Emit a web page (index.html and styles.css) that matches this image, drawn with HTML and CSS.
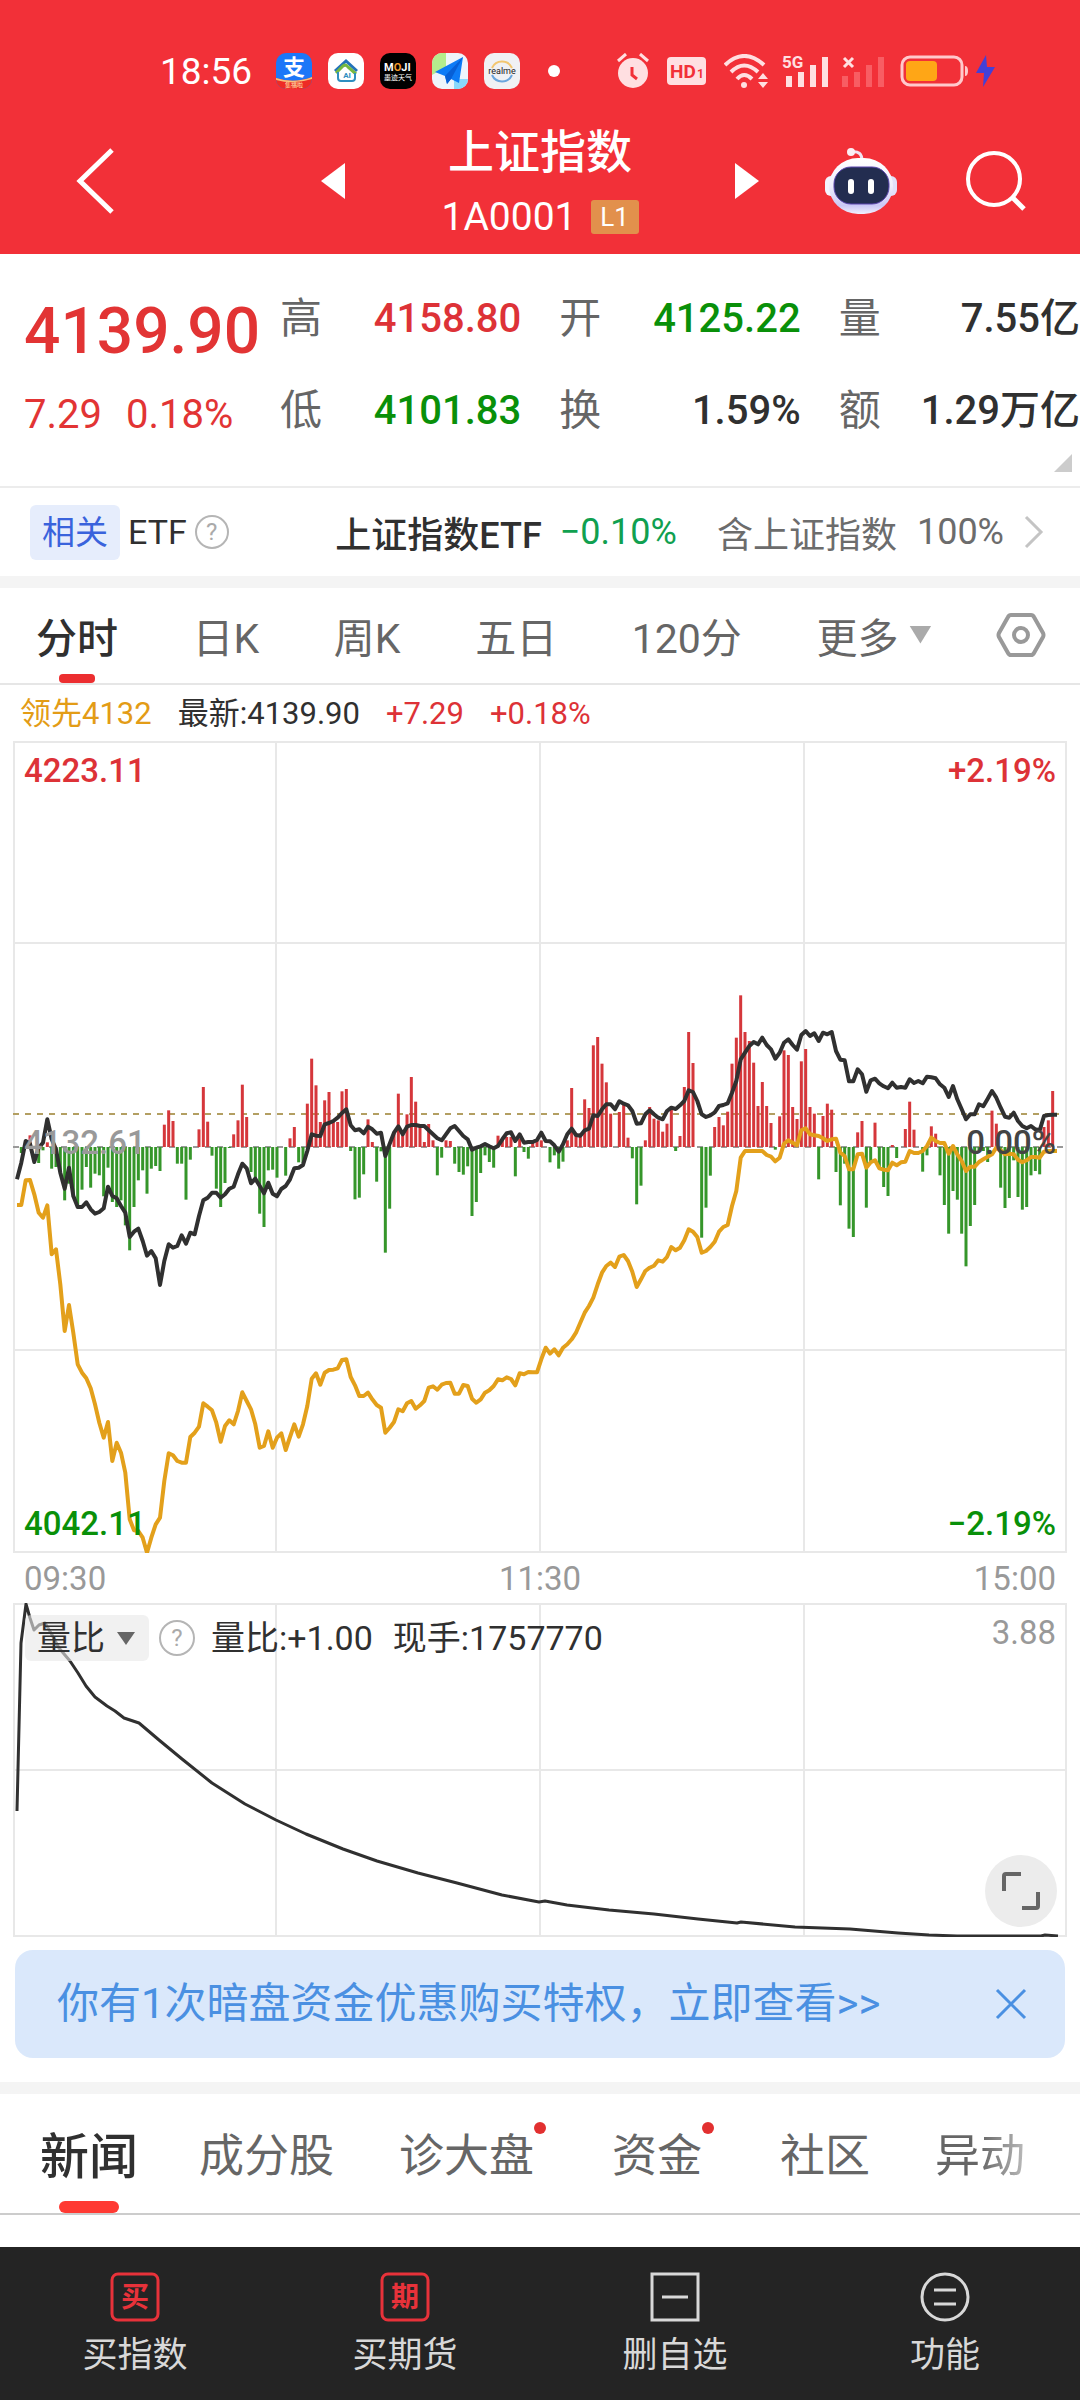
FILE: index.html
```html
<!DOCTYPE html>
<html lang="zh-CN">

<head>
  <meta charset="UTF-8">
  <meta name="viewport" content="width=device-width, initial-scale=1.0">
  <title>上证指数</title>
  <link rel="stylesheet" href="styles.css">
</head>

<body>
  <header class="top">
    <div class="status">
      <span class="time">18:56</span>
      <div class="apps">
        <svg class="app" viewBox="0 0 36 36">
          <defs><clipPath id="appClip"><rect width="36" height="36" rx="10" /></clipPath></defs>
          <g clip-path="url(#appClip)">
            <rect width="36" height="36" fill="#1c77f8" />
            <path d="M0 25 Q18 31 36 24 V36 H0Z" fill="#ee2b25" />
            <path d="M0 25 Q18 31 36 24 V26 Q18 32 0 27Z" fill="#f8c07c" />
            <text x="18" y="22" font-size="22" font-weight="700" fill="#fff" text-anchor="middle">支</text>
            <text x="18" y="34" font-size="6" fill="#ffe6b0" text-anchor="middle">集福啦</text>
          </g>
        </svg>
        <svg class="app" viewBox="0 0 36 36">
          <rect width="36" height="36" rx="10" fill="#fff" />
          <path d="M7 18 L18 8 L29 18" fill="none" stroke="#2273b9" stroke-width="3" />
          <path d="M8 20 L15 13 Q18 11 20 14 L28 21" fill="none" stroke="#75b842" stroke-width="3" />
          <path d="M10 19 V25 Q10 28 13 28 H24 Q27 28 27 25 V20" fill="none" stroke="#2e8ec0" stroke-width="2" />
          <text x="19" y="25" font-size="8" font-weight="700" fill="#2e8ec0" text-anchor="middle">AI</text>
        </svg>
        <svg class="app" viewBox="0 0 36 36">
          <rect width="36" height="36" rx="10" fill="#000" />
          <text x="4" y="18" font-size="11" font-weight="700" fill="#fff">M<tspan fill="#f39a2a">O</tspan>JI</text>
          <text x="18" y="27" font-size="7" fill="#fff" text-anchor="middle">墨迹天气</text>
        </svg>
        <svg class="app" viewBox="0 0 36 36">
          <g clip-path="url(#appClip)">
            <rect width="36" height="36" fill="#eef4fb" />
            <path d="M0 0 H14 V14 L0 22Z" fill="#b5ec8d" />
            <path d="M22 26 H36 V36 H22Z" fill="#8ad8fb" />
            <path d="M3 19 L31 4 L27 30 L19 26 L15 31 L13 23Z" fill="#0d7bf6" />
            <path d="M31 4 L13 23 L15 31 L19 26Z" fill="#075fd6" />
          </g>
        </svg>
        <svg class="app" viewBox="0 0 36 36">
          <rect width="36" height="36" rx="10" fill="#f0f1f4" />
          <path d="M8 15 A11 11 0 0 1 28 15" fill="none" stroke="#f3c66f" stroke-width="2" />
          <path d="M8 22 A11 11 0 0 0 28 22" fill="none" stroke="#6aa5dd" stroke-width="2" />
          <text x="18" y="21" font-size="9" fill="#222" text-anchor="middle">realme</text>
        </svg>
      </div>
      <i class="more-dot"></i>
      <div class="signals">
        <svg class="wide" width="32" height="36" viewBox="0 0 32 36">
          <circle cx="16" cy="20" r="15" fill="#ffdfe1" />
          <path d="M1 8 L9 1 M23 1 L31 8" stroke="#ffdfe1" stroke-width="3" />
          <path d="M15 14 V22 L20 26" fill="none" stroke="#f23038" stroke-width="3" />
        </svg>
        <svg class="wide" width="39" height="28" viewBox="0 0 39 28">
          <rect width="39" height="28" rx="4" fill="#ffdfe1" />
          <text x="3" y="21" font-size="19" font-weight="700" fill="#f23038">HD</text>
          <text x="30" y="21" font-size="12" font-weight="700" fill="#f23038">1</text>
        </svg>
        <svg width="44" height="34" viewBox="0 0 44 34">
          <g fill="none" stroke="#ffdfe1" stroke-width="4">
            <path d="M1 11 Q20 -7 40 11" />
            <path d="M7 18 Q20 5 34 18" />
            <path d="M13 25 Q20 17 28 25" />
          </g>
          <circle cx="20" cy="31" r="3" fill="#ffdfe1" />
          <path d="M34 25 L39 19 L44 25Z M34 28 H44 L39 34Z" fill="#ffdfe1" />
        </svg>
        <svg width="46" height="42" viewBox="0 -4 46 42">
          <text x="0" y="14" font-size="17" font-weight="700" fill="#ffdfe1">5G</text>
          <path d="M4 22 h6 v11 h-6z M16 18 h6 v15 h-6z M28 11 h6 v22 h-6z M40 3 h6 v30 h-6z" fill="#ffdfe1" />
        </svg>
        <svg width="44" height="34" viewBox="0 0 44 34">
          <path d="M2 4 L11 13 M11 4 L2 13" stroke="#ffdfe1" stroke-width="3" />
          <path d="M0 22 h6 v11 h-6z M12 18 h6 v15 h-6z M24 11 h6 v22 h-6z M36 3 h6 v30 h-6z" fill="#f85d63" />
        </svg>
        <svg width="96" height="32" viewBox="0 0 96 32">
          <rect x="2" y="2" width="60" height="28" rx="8" fill="none" stroke="#ffc9cc" stroke-width="3" />
          <rect x="6" y="6" width="31" height="20" rx="4" fill="#ffa616" />
          <path d="M65 11 q3 0 3 5 t-3 5z" fill="#ffc9cc" />
          <path d="M86 0 L76 18 H84 L83 32 L95 12 H87Z" fill="#4340d8" />
        </svg>
      </div>
    </div>
    <div class="nav">
      <button type="button" class="back" aria-label="返回">
        <svg width="38" height="66" viewBox="0 0 38 66"><path d="M36 2 L4 33 L36 64" fill="none" stroke="#fff" stroke-width="5" /></svg>
      </button>
      <button type="button" class="prev" aria-label="上一个">
        <svg width="24" height="36" viewBox="0 0 24 36"><path d="M24 0 V36 L0 18Z" fill="#fff" /></svg>
      </button>
      <div class="name">
        <h1>上证指数</h1>
        <p>1A0001<span class="level">L1</span></p>
      </div>
      <button type="button" class="next" aria-label="下一个">
        <svg width="24" height="36" viewBox="0 0 24 36"><path d="M0 0 V36 L24 18Z" fill="#fff" /></svg>
      </button>
      <button type="button" class="robot" aria-label="智能助手">
        <svg width="72" height="68" viewBox="0 0 72 68">
          <defs>
            <linearGradient id="shell" x1="0" y1="0" x2="0" y2="1">
              <stop offset="0" stop-color="#fff" />
              <stop offset="0.5" stop-color="#f0eefc" />
              <stop offset="0.85" stop-color="#cbc8f5" />
              <stop offset="1" stop-color="#f1f0fd" />
            </linearGradient>
          </defs>
          <path d="M26 5 Q37 3 37 14" fill="none" stroke="#f0e4f2" stroke-width="3" />
          <circle cx="26" cy="5" r="4" fill="#fbeef4" />
          <rect x="0" y="29" width="12" height="20" rx="6" fill="#f4f3fd" />
          <rect x="60" y="29" width="12" height="20" rx="6" fill="#e2e0fa" />
          <rect x="4" y="11" width="64" height="56" rx="29" fill="url(#shell)" />
          <rect x="9" y="20" width="55" height="37" rx="17" fill="#232d50" stroke="#5a45ae" stroke-width="1" />
          <rect x="23" y="32" width="6" height="15" rx="3" fill="#fff" />
          <rect x="43" y="32" width="6" height="15" rx="3" fill="#fff" />
        </svg>
      </button>
      <button type="button" class="search" aria-label="搜索">
        <svg width="60" height="60" viewBox="0 0 60 60">
          <circle cx="28" cy="28" r="26" fill="none" stroke="#fff" stroke-width="4" />
          <path d="M47 47 L58 58" stroke="#fff" stroke-width="5" />
        </svg>
      </button>
    </div>
  </header>

  <main>
    <section class="quote">
      <div class="price">
        <strong>4139.90</strong>
        <p><span>7.29</span><span>0.18%</span></p>
      </div>
      <dl class="figures">
        <div><dt>高</dt><dd class="up">4158.80</dd></div>
        <div><dt>开</dt><dd class="down">4125.22</dd></div>
        <div><dt>量</dt><dd>7.55亿</dd></div>
        <div><dt>低</dt><dd class="down">4101.83</dd></div>
        <div><dt>换</dt><dd>1.59%</dd></div>
        <div><dt>额</dt><dd>1.29万亿</dd></div>
      </dl>
      <i class="corner"></i>
    </section>

    <a class="etf" href="#etf">
      <span class="tag">相关</span>
      <span class="etf-label">ETF</span>
      <span class="help">?</span>
      <span class="etf-name">上证指数ETF</span>
      <span class="etf-change">−0.10%</span>
      <span class="etf-part">含上证指数</span>
      <span class="etf-rate">100%</span>
      <svg width="20" height="34" viewBox="0 0 20 34"><path d="M2 2 L17 17 L2 32" fill="none" stroke="#c4c4c4" stroke-width="3" /></svg>
    </a>

    <nav class="periods">
      <button type="button" class="active">分时</button>
      <button type="button">日K</button>
      <button type="button">周K</button>
      <button type="button">五日</button>
      <button type="button">120分</button>
      <button type="button" class="more">更多<i class="arrow"></i></button>
      <button type="button" aria-label="设置">
        <svg width="50" height="46" viewBox="0 0 50 46">
          <path d="M15 3 H35 Q37 3 38 5 L47 21 Q48 23 47 25 L38 41 Q37 43 35 43 H15 Q13 43 12 41 L3 25 Q2 23 3 21 L12 5 Q13 3 15 3Z" fill="none" stroke="#999" stroke-width="4" />
          <circle cx="25" cy="23" r="7" fill="none" stroke="#999" stroke-width="4" />
        </svg>
      </button>
    </nav>

    <p class="legend">
      <span class="lead">领先4132</span>
      <span>最新:4139.90</span>
      <span class="up">+7.29</span>
      <span class="up">+0.18%</span>
    </p>

    <div class="chart">
      <svg class="minute" viewBox="0 0 1054 812">
        <path class="grid" d="M1 1 H1053 V811 H1 Z M263 0 V812 M527 0 V812 M791 0 V812 M0 202 H1054 M0 609 H1054" />
        <path class="dash zero" d="M0 406 H1054" />
        <path class="dash now" d="M0 373 H1046" />
        <g class="bars"></g>
        <polyline class="line average" />
        <polyline class="line latest" />
      </svg>
      <span class="label high up">4223.11</span>
      <span class="label high right up">+2.19%</span>
      <span class="label middle">4132.61</span>
      <span class="label middle right">0.00%</span>
      <span class="label low down">4042.11</span>
      <span class="label low right down">−2.19%</span>
    </div>
    <div class="times"><span>09:30</span><span>11:30</span><span>15:00</span></div>

    <div class="chart">
      <svg class="ratio" viewBox="0 0 1054 334">
        <path class="grid" d="M1 1 H1053 V333 H1 Z M263 0 V334 M527 0 V334 M791 0 V334 M0 167 H1054" />
        <polyline class="line volume" points="4,208 8,40 13,1 17,15 21,27 26,22 32,20 38,30 46,45 57,58 65,70 73,83 82,94 94,103 102,108 111,115 126,120 146,137 169,156 199,180 232,201 263,217 293,231 330,246 364,258 405,270 444,280 489,292 526,299 532,298 554,302 596,307 641,311 685,316 724,320 728,319 782,324 837,326 885,330 916,332 944,333 1028,333 1032,332 1045,333" />
      </svg>
      <div class="tools">
        <label class="picker">
          <select aria-label="指标">
            <option>量比</option>
            <option>成交量</option>
          </select>
          <i class="arrow"></i>
        </label>
        <span class="help">?</span>
        <span>量比:+1.00</span>
        <span>现手:1757770</span>
        <span class="max">3.88</span>
      </div>
      <button type="button" class="expand" aria-label="放大">
        <svg width="38" height="38" viewBox="0 0 38 38"><path d="M2 19 V4 Q2 2 4 2 H19 M36 20 V34 Q36 36 34 36 H20" fill="none" stroke="#666" stroke-width="4" /></svg>
      </button>
    </div>

    <div class="notice">
      <a href="#offer">你有1次暗盘资金优惠购买特权，立即查看&gt;&gt;</a>
      <button type="button" aria-label="关闭">
        <svg width="32" height="32" viewBox="0 0 32 32"><path d="M2 2 L30 30 M30 2 L2 30" stroke="#4a90e2" stroke-width="3" /></svg>
      </button>
    </div>

    <nav class="sections">
      <button type="button" class="active">新闻</button>
      <button type="button">成分股</button>
      <button type="button" class="new">诊大盘</button>
      <button type="button" class="new">资金</button>
      <button type="button">社区</button>
      <button type="button" class="fade">异动</button>
    </nav>
  </main>

  <footer class="actions">
    <button type="button">
      <svg class="red" viewBox="0 0 50 50"><rect x="2" y="2" width="46" height="46" rx="6" /><text x="25" y="35" text-anchor="middle">买</text></svg>
      买指数
    </button>
    <button type="button">
      <svg class="red" viewBox="0 0 50 50"><rect x="2" y="2" width="46" height="46" rx="6" /><text x="25" y="35" text-anchor="middle">期</text></svg>
      买期货
    </button>
    <button type="button">
      <svg viewBox="0 0 50 50"><rect x="2" y="2" width="46" height="46" /><path d="M12 25 H38" /></svg>
      删自选
    </button>
    <button type="button">
      <svg viewBox="0 0 50 50"><circle cx="25" cy="25" r="23" /><path d="M14 18 H36 M14 32 H36" /></svg>
      功能
    </button>
  </footer>

  <script>
    // 每分钟一个点，共241个
    const step = 1040 / 240
    const left = 4
    const zeroY = 406

    // 红绿柱，正数向上
    const bars = [
      0, -18, 20, 35, 0, -48, -10, 14, -65, -60, -75, -160, -110, -150, -175, -128, -60, -122, -80, -85,
      -148, -62, -165, -180, -160, -235, -310, -180, -100, -70, -140, -65, -57, -72, 67, 110, 78, -50, -50, -158,
      -38, 0, 53, 180, 76, -26, -125, -180, -108, -3, 38, 80, 187, 90, -75, -95, -200, -240, -70, -68,
      -92, 0, -86, 26, 60, -46, -48, 130, 265, 185, 75, 140, 165, 75, 75, 167, 174, -12, -157, -152,
      -82, 83, 15, -104, -13, -317, -185, 45, 160, 45, 98, 210, 136, 60, 15, 69, 20, -85, -32, 20,
      18, -50, -75, -83, -58, -207, -165, -78, -25, -45, -62, 34, 24, 30, 30, -88, 25, -15, -35, 15,
      18, 20, 0, -46, -25, -65, -44, 20, 177, 40, 40, 143, 117, 305, 330, 250, 194, 100, 0, 105,
      130, 28, -34, -172, -116, 20, 120, 85, 80, 46, 70, 115, -12, 33, 180, 345, 252, 0, -272, -182,
      -86, 60, 90, 65, 106, 250, 328, 455, 345, 318, 253, 123, 195, 123, 72, -8, 92, 290, 276, 120,
      84, 257, 294, 120, 100, -97, 93, 130, 112, -75, -175, -50, -245, -270, 44, 78, -182, -45, 73, -60,
      -120, -147, 6, -33, 0, 54, 136, 52, 0, -74, -25, 62, 40, -85, -174, -260, -132, -158, -260, -358,
      -237, -174, -10, -12, -45, 109, 70, -122, -183, -153, -40, -150, -188, -180, -85, -72, -82, 60, 80, 168, 0
    ]

    // 最新价
    const latest = [
      655, 605, 540, 548, 603, 560, 545, 475, 535, 565, 635, 683, 620, 705, 738, 738, 724, 745, 758, 753,
      742, 677, 705, 712, 735, 755, 828, 812, 803, 840, 884, 870, 892, 972, 900, 850, 860, 855, 823, 848,
      815, 820, 765, 718, 710, 695, 695, 710, 700, 683, 677, 640, 608, 622, 667, 653, 675, 697, 665, 698,
      706, 684, 675, 655, 622, 620, 612, 570, 520, 524, 525, 490, 486, 480, 470, 456, 445, 493, 508, 505,
      517, 497, 505, 518, 515, 585, 548, 515, 496, 520, 497, 492, 492, 495, 495, 508, 520, 532, 538, 520,
      502, 495, 510, 525, 535, 566, 560, 556, 549, 556, 562, 555, 535, 517, 514, 540, 520, 545, 543, 543,
      537, 515, 540, 541, 553, 572, 550, 520, 503, 522, 524, 508, 503, 463, 465, 445, 430, 430, 445, 421,
      428, 433, 450, 488, 487, 460, 448, 460, 470, 475, 450, 440, 444, 433, 420, 388, 393, 420, 460, 468,
      463, 454, 435, 432, 427, 395, 360, 295, 275, 255, 243, 250, 230, 252, 265, 293, 275, 245, 235, 252,
      266, 222, 210, 225, 217, 240, 215, 220, 213, 270, 296, 298, 361, 361, 325, 340, 392, 358, 353, 367,
      376, 382, 365, 380, 378, 380, 355, 366, 360, 367, 347, 349, 352, 370, 380, 408, 375, 415, 445, 475,
      460, 460, 430, 436, 413, 390, 410, 440, 467, 470, 455, 480, 495, 502, 495, 505, 508, 465, 462, 461, 461
    ]

    // 领先
    const average = [
      732, 732, 658, 657, 700, 755, 770, 733, 880, 865, 970, 1110, 1032, 1115, 1210, 1235, 1252, 1282, 1330, 1385,
      1430, 1383, 1500, 1445, 1475, 1535, 1675, 1708, 1710, 1730, 1775, 1730, 1690, 1670, 1560, 1477, 1483, 1500, 1505, 1505,
      1428, 1415, 1397, 1327, 1337, 1348, 1385, 1442, 1395, 1378, 1390, 1350, 1294, 1320, 1345, 1390, 1460, 1455, 1411, 1460,
      1430, 1417, 1467, 1428, 1390, 1427, 1390, 1335, 1253, 1237, 1271, 1235, 1227, 1226, 1222, 1197, 1195, 1248, 1273, 1305,
      1305, 1295, 1315, 1332, 1340, 1415, 1400, 1383, 1345, 1351, 1327, 1320, 1343, 1333, 1320, 1280, 1276, 1286, 1271, 1266,
      1265, 1298, 1298, 1272, 1275, 1313, 1325, 1315, 1295, 1288, 1275, 1255, 1258, 1249, 1254, 1273, 1237, 1240, 1233, 1234,
      1234, 1195, 1160, 1178, 1165, 1183, 1160, 1150, 1135, 1115, 1085, 1055, 1035, 1010, 970, 935, 915, 905, 918, 887,
      882, 900, 932, 978, 955, 930, 920, 914, 898, 902, 888, 858, 868, 860, 838, 805, 812, 828, 875, 870,
      858, 842, 812, 798, 792, 735, 690, 590, 570, 570, 570, 570, 570, 582, 587, 601, 590, 548, 538, 545,
      553, 508, 502, 520, 523, 525, 532, 540, 535, 533, 575, 585, 625, 625, 580, 578, 620, 604, 598, 622,
      626, 628, 605, 613, 604, 602, 570, 576, 576, 570, 555, 530, 540, 546, 546, 578, 555, 580, 600, 630,
      617, 617, 603, 595, 587, 580, 560, 568, 580, 578, 580, 596, 604, 598, 588, 588, 590, 572, 570, 570, 570
    ]

    function drawLine(selector, data) {
      const points = data.map((value, index) => {
        return (left + index * step).toFixed(1) + ',' + (220 + value / 3).toFixed(1)
      })
      document.querySelector(selector).setAttribute('points', points.join(' '))
    }

    const oBars = document.querySelector('.bars')
    bars.forEach((value, index) => {
      if (value === 0) return
      const rect = document.createElementNS('http://www.w3.org/2000/svg', 'rect')
      const height = Math.abs(value) / 3
      rect.setAttribute('x', left + index * step - 1.5)
      rect.setAttribute('y', value > 0 ? zeroY - height : zeroY)
      rect.setAttribute('width', 3)
      rect.setAttribute('height', height)
      rect.setAttribute('class', value > 0 ? 'bar-up' : 'bar-down')
      oBars.appendChild(rect)
    })
    drawLine('.average', average)
    drawLine('.latest', latest)
  </script>
</body>

</html>
```

FILE: styles.css
```css
* {
  box-sizing: border-box;
}

body {
  margin: 0;
  min-height: 100vh;
  display: flex;
  flex-direction: column;
  background-color: #fff;
  color: #303030;
  font-family: Roboto, "Noto Sans CJK SC", sans-serif;
}

h1,
p,
dl,
dd {
  margin: 0;
}

button {
  margin: 0;
  padding: 0;
  border: none;
  background: none;
  color: inherit;
  font: inherit;
  cursor: pointer;
}

a {
  color: inherit;
  text-decoration: none;
}

svg {
  display: block;
  flex-shrink: 0;
}

.up {
  color: #dd3237;
}

.down {
  color: #099009;
}

/* 顶部 */
.top {
  background-color: #f23038;
  color: #fff;
}

.status {
  height: 114px;
  padding: 28px 84px 0 160px;
  display: flex;
  align-items: center;
}

.time {
  width: 116px;
  font-size: 37px;
}

.apps {
  display: flex;
  gap: 16px;
}

.app {
  width: 36px;
  height: 36px;
}

.more-dot {
  margin-left: 28px;
  width: 12px;
  height: 12px;
  border-radius: 50%;
  background-color: #fff;
}

.signals {
  margin-left: auto;
  display: flex;
  align-items: center;
  gap: 14px;
}

.signals .wide {
  margin-right: 4px;
}

.nav {
  height: 140px;
  padding: 0 54px 6px 76px;
  display: grid;
  grid-template-columns: 245px 24px 1fr 24px 66px 72px 129px;
  align-items: center;
}

.nav .search {
  justify-self: end;
}

.nav .robot {
  grid-column: 6;
}

.name {
  text-align: center;
}

.name h1 {
  font-size: 46px;
  font-weight: 500;
  line-height: 72px;
}

.name p {
  display: flex;
  justify-content: center;
  align-items: center;
  gap: 14px;
  font-size: 39px;
  line-height: 58px;
}

.level {
  width: 48px;
  border-radius: 3px;
  background-color: #e2904c;
  font-size: 26px;
  line-height: 34px;
}

/* 行情 */
.quote {
  position: relative;
  padding: 34px 0 40px 24px;
  display: flex;
}

.price {
  width: 256px;
  flex-shrink: 0;
  color: #e23434;
}

.price strong {
  display: block;
  font-size: 64px;
  font-weight: 500;
  line-height: 88px;
}

.price p {
  margin-top: 8px;
  display: flex;
  gap: 24px;
  font-size: 40px;
  line-height: 62px;
}

.figures {
  flex: 1;
  display: grid;
  grid-template-columns: repeat(3, 1fr);
  align-content: start;
  gap: 30px 38px;
  font-size: 40px;
  line-height: 62px;
}

.figures div {
  display: flex;
  justify-content: space-between;
}

.figures dt {
  font-size: 42px;
  color: #666;
}

.figures dd {
  font-weight: 500;
  white-space: nowrap;
}

.corner {
  position: absolute;
  right: 8px;
  bottom: 14px;
  width: 18px;
  height: 18px;
  background-color: #ccc;
  clip-path: polygon(100% 0, 100% 100%, 0 100%);
}

/* 相关ETF */
.etf {
  height: 90px;
  padding: 0 36px 0 30px;
  display: flex;
  align-items: center;
  border-top: 2px solid #ececec;
  font-size: 36px;
}

.tag {
  padding: 0 12px;
  border-radius: 6px;
  background-color: #e6edfc;
  color: #3a63dc;
  font-size: 33px;
  line-height: 55px;
}

.etf-label {
  margin: 0 8px;
  font-size: 34px;
}

.help {
  width: 34px;
  height: 34px;
  border: 2px solid #b5b5b5;
  border-radius: 50%;
  color: #aaa;
  font-size: 24px;
  line-height: 30px;
  text-align: center;
}

.etf-name {
  margin-left: auto;
  font-weight: 500;
}

.etf-change {
  margin: 0 40px 0 18px;
  color: #10a050;
}

.etf-part,
.etf-rate {
  margin-right: 20px;
  color: #6c6c6c;
}

/* 周期 */
.periods {
  height: 109px;
  padding: 0 34px 0 36px;
  display: flex;
  justify-content: space-between;
  border-top: 12px solid #f4f4f4;
  border-bottom: 2px solid #e6e6e6;
  color: #666;
  font-size: 41px;
}

.periods button,
.sections button {
  position: relative;
  display: flex;
  align-items: center;
  padding-bottom: 2px;
}

.periods .more {
  margin-right: -10px;
}

.periods .active,
.sections .active {
  color: #303030;
  font-weight: 500;
}

.periods .active::after,
.sections .active::after {
  content: "";
  position: absolute;
  left: 50%;
  bottom: 0;
  width: 36px;
  height: 9px;
  border-radius: 4px;
  background-color: #ec2e30;
  transform: translateX(-50%);
}

.arrow {
  width: 22px;
  height: 18px;
  background-color: #aaa;
  clip-path: polygon(0 0, 100% 0, 50% 100%);
}

.periods .arrow {
  margin-left: 11px;
}

/* 分时图 */
.legend {
  padding: 2px 20px 0;
  display: flex;
  gap: 26px;
  font-size: 31px;
  line-height: 54px;
}

.lead {
  color: #e39c16;
}

.chart {
  position: relative;
  margin: 0 13px;
}

.chart svg {
  max-width: 100%;
}

.chart .minute,
.chart .ratio {
  width: 100%;
  height: auto;
}

.grid {
  fill: none;
  stroke: #e8e8e8;
  stroke-width: 2;
}

.dash {
  fill: none;
  stroke-width: 2;
  stroke-dasharray: 6 6;
}

.zero {
  stroke: #999;
}

.now {
  stroke: #b39f62;
}

.bar-up {
  fill: #d5373b;
}

.bar-down {
  fill: #35962a;
}

.line {
  fill: none;
  stroke: #303030;
  stroke-width: 4;
  stroke-linejoin: round;
}

.average {
  stroke: #e3a01b;
}

.volume {
  stroke-width: 3;
}

.label {
  position: absolute;
  left: 11px;
  font-size: 33px;
  font-weight: 500;
  line-height: 40px;
}

.label.right {
  left: auto;
  right: 11px;
}

.high {
  top: 10px;
}

.middle {
  top: 50%;
  transform: translateY(-24px);
  color: #999;
}

.middle.right {
  color: #444;
}

.low {
  bottom: 9px;
}

.times {
  padding: 6px 24px 4px;
  display: flex;
  justify-content: space-between;
  color: #999;
  font-size: 33px;
  line-height: 40px;
}

.tools {
  position: absolute;
  top: 12px;
  left: 12px;
  right: 11px;
  display: flex;
  align-items: center;
  font-size: 34px;
  line-height: 46px;
}

.tools .help {
  margin: 0 16px 0 10px;
  width: 36px;
  height: 36px;
  line-height: 32px;
}

.tools span + span + span {
  margin-left: 20px;
}

.tools .max.max {
  margin-left: auto;
  align-self: flex-start;
  color: #999;
  font-size: 33px;
  line-height: 36px;
}

.picker {
  position: relative;
}

.picker select {
  display: block;
  width: 124px;
  height: 46px;
  padding: 0 0 0 12px;
  border: none;
  border-radius: 6px;
  appearance: none;
  background-color: rgba(232, 232, 232, .6);
  color: #303030;
  font: inherit;
}

.picker .arrow {
  position: absolute;
  top: 17px;
  right: 14px;
  width: 18px;
  height: 13px;
  background-color: #666;
}

.expand {
  position: absolute;
  right: 10px;
  bottom: 10px;
  width: 72px;
  height: 72px;
  border-radius: 50%;
  background-color: #ececec;
  display: flex;
  justify-content: center;
  align-items: center;
}

/* 提示 */
.notice {
  margin: 13px 15px 24px;
  padding: 0 38px 0 42px;
  display: flex;
  justify-content: space-between;
  align-items: center;
  border-radius: 18px;
  background-color: #dae8fb;
  color: #4a90e2;
  font-size: 42px;
  line-height: 108px;
}

/* 资讯 */
.sections {
  height: 133px;
  padding: 0 56px 0 40px;
  display: flex;
  gap: 65px;
  border-top: 12px solid #f4f4f4;
  border-bottom: 2px solid #ccc;
  color: #666;
  font-size: 45px;
  white-space: nowrap;
  overflow: hidden;
}

.sections .active {
  margin-right: -4px;
  font-size: 49px;
}

.sections .active::after {
  width: 60px;
  height: 12px;
  border-radius: 6px;
  background-color: #ff3a33;
}

.sections .new {
  margin-right: 13px;
}

.sections .new::after {
  content: "";
  position: absolute;
  top: 28px;
  right: -12px;
  width: 12px;
  height: 12px;
  border-radius: 50%;
  background-color: #e23030;
}

.sections .fade {
  background: linear-gradient(90deg, #666 50%, #bbb);
  background-clip: text;
  color: transparent;
}

/* 底部 */
.actions {
  margin-top: auto;
  height: 153px;
  display: grid;
  grid-template-columns: repeat(4, 1fr);
  background-color: #242424;
  color: #d8d8d8;
  font-size: 35px;
}

.actions button {
  display: flex;
  flex-direction: column;
  align-items: center;
  gap: 9px;
  padding-top: 25px;
  line-height: 50px;
}

.actions svg {
  width: 50px;
  height: 50px;
  fill: none;
  stroke: #d8d8d8;
  stroke-width: 3;
}

.actions .red {
  stroke: #e8323a;
}

.actions text {
  fill: #e8323a;
  stroke: none;
  font-size: 28px;
  font-weight: 700;
}
```
